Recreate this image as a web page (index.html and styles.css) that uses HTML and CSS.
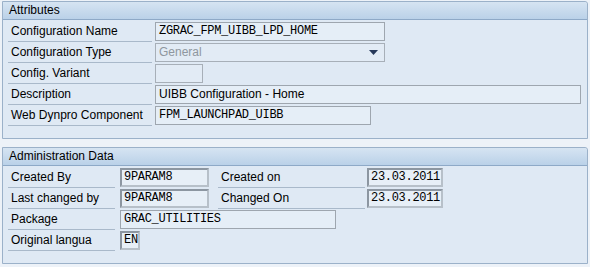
FILE: index.html
```html
<!DOCTYPE html>
<html lang="en">
<head>
  <meta charset="UTF-8">
  <title>UIBB Configuration</title>
  <link rel="stylesheet" href="styles.css">
</head>
<body>
  <!-- Atributos de la configuración -->
  <section class="panel panel-attr">
    <div class="panel-head">Attributes</div>
    <div class="panel-body">
      <div class="row">
        <span class="lbl lbl-wide">Configuration Name</span>
        <span class="fld w-name">ZGRAC_FPM_UIBB_LPD_HOME</span>
      </div>
      <div class="row">
        <span class="lbl lbl-wide">Configuration Type</span>
        <span class="fld fld-off fld-select w-name">General
          <svg class="arrow" width="9" height="5" viewBox="0 0 9 5"><path d="M0 0H9L4.5 5Z" fill="#26385a"/></svg>
        </span>
      </div>
      <div class="row">
        <span class="lbl lbl-wide">Config. Variant</span>
        <span class="fld fld-off w-variant"></span>
      </div>
      <div class="row">
        <span class="lbl lbl-wide">Description</span>
        <span class="fld fld-text w-desc">UIBB Configuration - Home</span>
      </div>
      <div class="row">
        <span class="lbl lbl-wide">Web Dynpro Component</span>
        <span class="fld w-wdc">FPM_LAUNCHPAD_UIBB</span>
      </div>
    </div>
  </section>

  <!-- Datos de administración -->
  <section class="panel panel-admin">
    <div class="panel-head">Administration Data</div>
    <div class="panel-body">
      <div class="row">
        <span class="lbl lbl-short">Created By</span>
        <span class="fld fld-ro w-user">9PARAM8</span>
        <span class="lbl lbl-mid">Created on</span>
        <span class="fld fld-ro w-date">23.03.2011</span>
      </div>
      <div class="row">
        <span class="lbl lbl-short">Last changed by</span>
        <span class="fld fld-ro w-user">9PARAM8</span>
        <span class="lbl lbl-mid">Changed On</span>
        <span class="fld fld-ro w-date">23.03.2011</span>
      </div>
      <div class="row">
        <span class="lbl lbl-short">Package</span>
        <span class="fld w-pkg">GRAC_UTILITIES</span>
      </div>
      <div class="row">
        <span class="lbl lbl-short">Original langua</span>
        <span class="fld fld-ro w-lang">EN</span>
      </div>
    </div>
  </section>
</body>
</html>
```

FILE: styles.css
```css
/* Fondo general */
body {
  margin: 0;
  padding: 1px 0 0 2px;
  font-family: "Liberation Sans", Arial, sans-serif;
  font-size: 12px;
  color: #000;
  background: #edf2f8;
}
/* Paneles con cabecera degradada */
.panel {
  width: 584px;
  background: #dfe9f4;
  border: 1px solid #9bb1c9;
  border-top-right-radius: 3px;
}
.panel-attr {
  height: 136px;
}
.panel-admin {
  margin-top: 8px;
  height: 115px;
}
.panel-head {
  height: 17px;
  line-height: 17px;
  padding-left: 6px;
  background: linear-gradient(#d6e4f2, #bad1e8);
  border-bottom: 1px solid #8ea9c7;
  border-top-right-radius: 3px;
}
.panel-body {
  display: flex;
  flex-direction: column;
  gap: 1px;
  padding: 2px 0 0 5px;
}
.row {
  display: flex;
  align-items: flex-start;
  height: 20px;
}
/* Etiquetas con línea inferior */
.lbl {
  box-sizing: border-box;
  height: 20px;
  line-height: 19px;
  padding-left: 3px;
  border-bottom: 1px solid #a9b9ca;
  white-space: nowrap;
  overflow: hidden;
}
.lbl-wide {
  width: 144px;
  margin-right: 3px;
}
.lbl-short {
  width: 107px;
  margin-right: 5px;
}
.lbl-mid {
  width: 147px;
  margin: 0 2px 0 9px;
}
/* Campos de entrada */
.fld {
  box-sizing: border-box;
  position: relative;
  height: 19px;
  line-height: 17px;
  padding-left: 3px;
  font-family: "Liberation Mono", "Courier New", monospace;
  font-size: 12px;
  letter-spacing: -0.3px;
  background: #e5eef7;
  border: 1px solid #9ea6af;
  white-space: nowrap;
}
.fld-text {
  font-family: "Liberation Sans", Arial, sans-serif;
  letter-spacing: 0;
}
.fld-off {
  font-family: "Liberation Sans", Arial, sans-serif;
  letter-spacing: 0;
  color: #8f979f;
  border-color: #a7afb8;
  background: #e2ebf5;
}
.fld-ro {
  border: 2px solid #b7c0c9;
  border-top-color: #8c96a1;
  border-left-color: #8c96a1;
  line-height: 15px;
  padding-left: 2px;
  background: #e7eff7;
}
.fld-select .arrow {
  position: absolute;
  right: 6px;
  top: 6px;
}
.w-name { width: 230px; }
.w-variant { width: 48px; }
.w-desc { width: 426px; }
.w-wdc { width: 216px; }
.w-user { width: 89px; }
.w-date { width: 76px; }
.w-pkg { width: 216px; }
.w-lang { width: 20px; }
```
